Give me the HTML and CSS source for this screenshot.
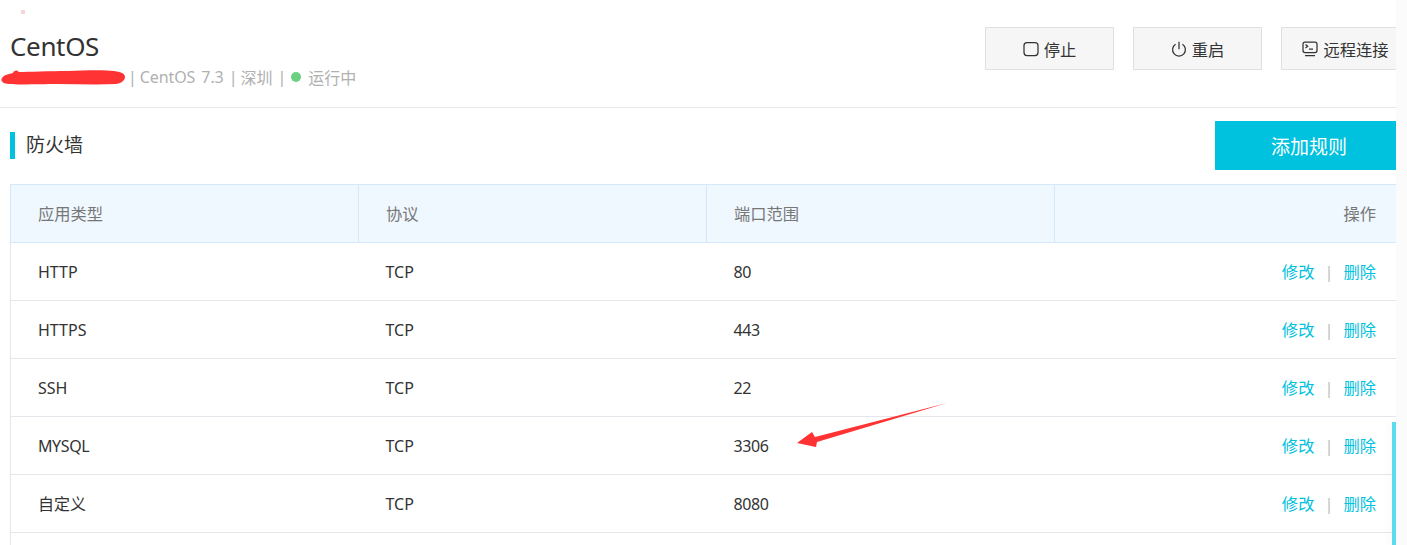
FILE: index.html
```html
<!DOCTYPE html>
<html lang="zh-CN">
<head>
<meta charset="utf-8">
<title>防火墙</title>
<link rel="stylesheet" href="styles.css">
</head>
<body>
<div class="page">
  <span class="speck"></span>
  <header class="head">
    <div class="info">
      <h1 class="name">CentOS</h1>
      <div class="meta">
        <span class="ip"></span>
        <span class="sep">|</span><span class="os">CentOS 7.3</span>
        <span class="sep">|</span><span>深圳</span>
        <span class="sep">|</span><span class="dot"></span><span>运行中</span>
      </div>
    </div>
    <div class="actions">
      <button class="act"><svg class="ico" viewBox="0 0 16 16"><rect x="1" y="1.5" width="14" height="13" rx="3"/></svg>停止</button>
      <button class="act"><svg class="ico" viewBox="0 0 16 16"><path d="M8 .8v7.4M4.6 3.2a6.4 6.4 0 1 0 6.8 0"/></svg>重启</button>
      <button class="act"><svg class="ico" viewBox="0 0 16 16"><rect x="1" y="1" width="14" height="10.5" rx="2"/><path d="M3.5 3.6l2.2 1.7-2.2 1.7M7 8h4M3 14.5h10"/></svg>远程连接</button>
    </div>
  </header>
  <section class="fw">
    <div class="fw-top">
      <h2 class="fw-title">防火墙</h2>
      <button class="add">添加规则</button>
    </div>
    <table class="rules">
      <thead>
        <tr><th>应用类型</th><th>协议</th><th>端口范围</th><th class="op">操作</th></tr>
      </thead>
      <tbody>
        <tr><td>HTTP</td><td>TCP</td><td class="num">80</td><td class="op"><a>修改</a><i>|</i><a>删除</a></td></tr>
        <tr><td>HTTPS</td><td>TCP</td><td class="num">443</td><td class="op"><a>修改</a><i>|</i><a>删除</a></td></tr>
        <tr><td>SSH</td><td>TCP</td><td class="num">22</td><td class="op"><a>修改</a><i>|</i><a>删除</a></td></tr>
        <tr><td class="num">MYSQL</td><td>TCP</td><td class="num">3306</td><td class="op"><a>修改</a><i>|</i><a>删除</a></td></tr>
        <tr><td class="cjk">自定义</td><td>TCP</td><td class="num">8080</td><td class="op"><a>修改</a><i>|</i><a>删除</a></td></tr>
        <tr><td colspan="4"></td></tr>
      </tbody>
    </table>
  </section>
  <svg class="scribble" viewBox="0 0 126 18" preserveAspectRatio="none"><path d="M1 11C3 8 8 7 12 6c2-3 4-3 6-1 10 0 30-1 50-1 20-1 38-1 46 0 8 1 11 3 11 6s-3 6-9 7c-20 1-40 0-60 0-15 0-38 1-48 0-6 0-9-3-7-6z"/></svg>
  <svg class="arrow" viewBox="0 0 150 46"><path d="M150 0 18 34 15 29 0 40 19 44 20 39z"/></svg>
  <span class="thumb"></span>
</div>
</body>
</html>
```
FILE: styles.css
```css
* { box-sizing: border-box; }
html, body { margin: 0; height: 100%; }
body {
  background: #fbfbfb;
  overflow: hidden;
  font-family: "Noto Sans", "Noto Sans CJK SC", sans-serif;
  color: #333;
}
.page {
  position: relative;
  width: 1396px;
  height: 545px;
  background: #fff;
  overflow: hidden;
}
.speck {
  position: absolute;
  left: 21px;
  top: 10px;
  width: 4px;
  height: 4px;
  background: #f6d5da;
}
.head {
  display: flex;
  justify-content: space-between;
  height: 108px;
  padding: 26px 0 0 10px;
  border-bottom: 1px solid #e8e8e8;
}
.name {
  margin: 0;
  font-size: 26px;
  font-weight: 400;
  line-height: 40px;
  letter-spacing: -0.35px;
  color: #333;
}
.meta {
  display: flex;
  align-items: center;
  margin-top: 1px;
  height: 20px;
  font-size: 16px;
  color: #b0b0b0;
}
.ip { width: 113px; }
.sep { margin: 0 3px 0 5px; }
.os { word-spacing: 2px; letter-spacing: -0.1px; }
.dot {
  width: 10px;
  height: 10px;
  margin: 0 7px 0 2px;
  border-radius: 50%;
  background: #6dcf81;
}
.actions {
  display: flex;
  gap: 19px;
  width: 411px;
  margin-top: 1px;
  flex: none;
}
.act {
  display: flex;
  align-items: center;
  justify-content: center;
  gap: 5px;
  width: 129px;
  height: 43px;
  padding: 0;
  flex: none;
  border: 1px solid #e0e0e0;
  background: #f6f6f6;
  font: inherit;
  font-size: 16.3px;
  color: #333;
}
.ico {
  width: 16px;
  height: 16px;
  fill: none;
  stroke: #333;
  stroke-width: 1.25;
}
.fw { padding: 13px 0 0 10px; }
.fw-top {
  display: flex;
  justify-content: space-between;
  align-items: center;
  height: 49px;
  margin-bottom: 14px;
}
.fw-title {
  margin: 0;
  padding-left: 11px;
  height: 27px;
  border-left: 5px solid #00c1de;
  font-size: 19px;
  font-weight: 400;
  line-height: 26px;
  color: #333;
}
.add {
  width: 181px;
  height: 49px;
  padding: 0 0 0 7px;
  border: 0;
  background: #00c1de;
  color: #fff;
  font: inherit;
  font-size: 19px;
}
.rules {
  width: 1386px;
  table-layout: fixed;
  border-collapse: collapse;
  font-size: 16px;
  border-left: 1px solid #e3e6ea;
}
.rules th, .rules td { padding: 0 0 0 27px; text-align: left; font-weight: 400; }
.rules th:not(:last-child), .rules td:not(:last-child) { width: 348px; }
.rules th {
  height: 58px;
  padding-bottom: 2px;
  background: #eff7ff;
  color: #777;
  font-size: 16.3px;
  border: 1px solid #d4e7fb;
}
.rules th:last-child { border-right: 0; }
.rules td {
  height: 58px;
  border-bottom: 1px solid #e3e6ea;
  color: #333;
}
.rules .cjk { padding-bottom: 2px; }
.rules .op { padding: 0 20px 2px 0; text-align: right; font-size: 16.3px; }
.num { letter-spacing: -0.4px; }
.op a { color: #00c1de; }
.op i { margin: 0 10px; font-style: normal; color: #c4bcb8; }
.scribble {
  position: absolute;
  left: 1px;
  top: 67px;
  width: 125px;
  height: 18px;
  fill: #ff3333;
}
.arrow {
  position: absolute;
  left: 797px;
  top: 403px;
  width: 150px;
  height: 46px;
  fill: #ff3333;
}
.thumb {
  position: absolute;
  left: 1392px;
  top: 422px;
  width: 4px;
  height: 123px;
  background: #5bdcec;
  box-shadow: -4px 0 6px rgba(0, 0, 0, 0.03);
}
```
